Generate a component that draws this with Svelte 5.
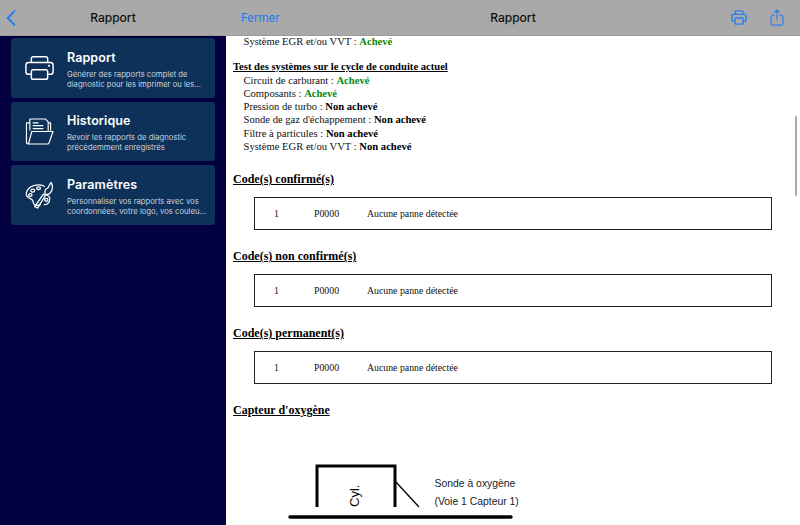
<script>
  const cards = [
    { id: 'print', title: 'Rapport', l1: 'Générer des rapports complet de', l2: 'diagnostic pour les imprimer ou les...' },
    { id: 'folder', title: 'Historique', l1: 'Revoir les rapports de diagnostic', l2: 'précédemment enregistrés' },
    { id: 'palette', title: 'Paramètres', l1: 'Personnaliser vos rapports avec vos', l2: 'coordonnées, votre logo, vos couleu...' }
  ];
  const systems = [
    ['Circuit de carburant', 'Achevé', true],
    ['Composants', 'Achevé', true],
    ['Pression de turbo', 'Non achevé', false],
    ['Sonde de gaz d\'échappement', 'Non achevé', false],
    ['Filtre à particules', 'Non achevé', false],
    ['Système EGR et/ou VVT', 'Non achevé', false]
  ];
  const codes = ['Code(s) confirmé(s)', 'Code(s) non confirmé(s)', 'Code(s) permanent(s)'];
</script>

<div class="root">
  <aside class="side">
    <header class="bar sidebar-bar">
      <svg class="back" viewBox="0 0 10 16" width="10" height="16"><path d="M8.5 1.2 1.8 8l6.7 6.8" fill="none" stroke="#1f7ff5" stroke-width="1.9" stroke-linecap="round" stroke-linejoin="round"/></svg>
      <span class="bar-title">Rapport</span>
    </header>
    <div class="cards">
      {#each cards as c}
        <div class="card">
          <div class="icon">
            {#if c.id === 'print'}
              <svg viewBox="0 0 32 28" width="29" height="26" fill="none" stroke="#fff" stroke-width="1.6" stroke-linejoin="round">
                <path d="M7 8V3.500A2 2 0 0 1 9 1.500h14a2 2 0 0 1 2 2V8"/>
                <path d="M7 21H4a3 3 0 0 1-3-3v-7a3 3 0 0 1 3-3h24a3 3 0 0 1 3 3v7a3 3 0 0 1-3 3h-3"/>
                <rect x="7" y="16" width="18" height="10.500" rx="2"/>
                <circle cx="26.500" cy="11.500" r="1.200" fill="#fff" stroke="none"/>
              </svg>
            {:else if c.id === 'folder'}
              <svg viewBox="0 0 30 28" width="29" height="27" fill="none" stroke="#fff" stroke-width="1.200" stroke-linejoin="round">
                <path d="M5 13V1h16l3 3v10"/>
                <path d="M24 5h2.500v8M5 5H1.500V25a2 2 0 0 0 2 2"/>
                <path d="M8 5h6M8 8h11M8 11h11" stroke-width="1.300"/>
                <path d="M3.500 27 7 14h22l-4 11.500a2 2 0 0 1-2 1.500z"/>
              </svg>
            {:else}
              <svg viewBox="0 0 30 30" width="29" height="30" fill="none" stroke="#fff" stroke-width="1.300" stroke-linejoin="round" stroke-linecap="round">
                <path d="M20 6C14 3 5 5 2 11c-2 5 1 7 4 8 3 1 2 3 3 5 1 2 4 2 7 1"/>
                <path d="M22 15c3 1 5 3 3 7-1 2-3 3-5 3"/>
                <ellipse cx="8" cy="10.500" rx="2" ry="1.500"/>
                <ellipse cx="14" cy="8" rx="2" ry="1.500"/>
                <ellipse cx="5.500" cy="15" rx="1.800" ry="1.500"/>
                <ellipse cx="22" cy="20" rx="1.800" ry="1.500"/>
                <path d="M11 29l9-13 2 1.500-8 13z" transform="translate(-1 -2)"/>
                <path d="M21 14c-1-3 0-5 2-6 2-1 2-4 4-6 2 3 2 8-1 11-1 1-3 2-5 1z"/>
              </svg>
            {/if}
          </div>
          <div class="text">
            <div class="title">{c.title}</div>
            <div class="desc">{c.l1}<br />{c.l2}</div>
          </div>
        </div>
      {/each}
    </div>
  </aside>

  <main class="main">
    <header class="bar main-bar">
      <span class="fermer">Fermer</span>
      <span class="bar-title center">Rapport</span>
      <div class="actions">
        <svg viewBox="0 0 18 17" width="16" height="15" fill="none" stroke="#2b7de9" stroke-width="1.600" stroke-linejoin="round">
          <path d="M4.500 5V2a1 1 0 0 1 1-1h7a1 1 0 0 1 1 1v3"/>
          <path d="M4 12.500H2.500a1.500 1.500 0 0 1-1.500-1.500V6.500A1.500 1.500 0 0 1 2.500 5h13A1.500 1.500 0 0 1 17 6.500V11a1.500 1.500 0 0 1-1.500 1.500H14"/>
          <rect x="4.500" y="9" width="9" height="7" rx="1"/>
        </svg>
        <svg viewBox="0 0 16 20" width="14" height="17" fill="none" stroke="#2b7de9" stroke-width="1.300" stroke-linecap="round" stroke-linejoin="round">
          <path d="M5 7H3a2 2 0 0 0-2 2v8a2 2 0 0 0 2 2h10a2 2 0 0 0 2-2V9a2 2 0 0 0-2-2h-2"/>
          <path d="M8 13V1M5 4l3-3 3 3"/>
        </svg>
      </div>
    </header>

    <div class="doc">
      <p class="line ind">Système EGR et/ou VVT : <b class="ok">Achevé</b></p>

      <h4>Test des systèmes sur le cycle de conduite actuel</h4>
      {#each systems as s}
        <p class="line ind">{s[0]} : <b class:ok={s[2]}>{s[1]}</b></p>
      {/each}

      {#each codes as code}
        <h3>{code}</h3>
        <div class="code-box">
          <span class="n">1</span><span class="p">P0000</span><span>Aucune panne détectée</span>
        </div>
      {/each}

      <h3>Capteur d'oxygène</h3>
      <svg class="diagram" viewBox="0 0 300 70" width="300" height="70">
        <path d="M58 47V6h78v41" fill="none" stroke="#000" stroke-width="3"/>
        <path d="M136 21l24 26" stroke="#000" stroke-width="1.300"/>
        <path d="M31 57h221" stroke="#000" stroke-width="3.500" stroke-linecap="round"/>
        <text x="0" y="0" transform="translate(100 47) rotate(-90)" class="dt">Cyl.</text>
        <text x="175.500" y="27" class="dl">Sonde à oxygène</text>
        <text x="175.500" y="45" class="dl">(Voie 1 Capteur 1)</text>
      </svg>
    </div>
    <div class="scroll"></div>
  </main>
</div>

<style>
  :global(body) { margin: 0; }
  .root { display: flex; width: 800px; height: 525px; overflow: hidden; font-family: Inter, "Liberation Sans", sans-serif; }
  .side { width: 226px; background: #02003f; flex: none; }
  .bar { height: 35px; background: #a9a9a9; display: flex; align-items: center; border-bottom: 1px solid #9c9c9c; box-sizing: content-box; }
  .sidebar-bar { position: relative; }
  .back { margin-left: 6px; }
  .bar-title { font-size: 12px; font-weight: 500; color: #111; }
  .sidebar-bar .bar-title { position: absolute; left: 0; right: 0; text-align: center; }
  .cards { padding: 2px 11px 0; display: flex; flex-direction: column; gap: 4px; }
  .card { height: 59.500px; background: #0e3159; border-radius: 3px; display: flex; align-items: center; }
  .icon { width: 56px; display: flex; justify-content: center; flex: none; }
  .text { color: #fff; padding-top: 4px; }
  .title { font-size: 12.500px; font-weight: 600; line-height: 16px; margin-bottom: 4px; letter-spacing: .1px; }
  .desc { font-size: 7.700px; line-height: 9.800px; color: #c9d3de; white-space: nowrap; }
  .main { flex: 1; background: #fff; position: relative; overflow: hidden; }
  .main-bar { position: relative; }
  .fermer { color: #1f78f0; font-size: 11.500px; margin-left: 15px; }
  .center { position: absolute; left: 0; right: 0; text-align: center; }
  .actions { position: absolute; right: 16px; top: 9px; display: flex; gap: 23px; align-items: center; }
  .doc { padding: 0 0 0 7px; font-family: "Liberation Serif", serif; font-size: 10.600px; color: #111; }
  .line { margin: 0; line-height: 13.300px; height: 13.300px; }
  .ind { padding-left: 10.500px; }
  .doc > .line:first-child { margin-top: -1px; }
  b { color: #000; }
  .ok { color: #0a8a0a; }
  h4 { margin: 13px 0 0; font-size: 10.600px; line-height: 12.300px; text-decoration: underline; color: #000; }
  h3 { margin: 18px 0 0; font-size: 12px; line-height: 16px; text-decoration: underline; color: #000; }
  .code-box { margin: 10px 0 0 21px; width: 518px; height: 33px; box-sizing: border-box; border: 1px solid #222; display: flex; align-items: center; font-size: 9.800px; }
  .n { width: 40px; margin-left: 19px; }
  .p { width: 53px; }
  .diagram { display: block; margin: 42px 0 0 26px; }
  .dt { font: 13px "Liberation Sans", sans-serif; fill: #000; }
  .dl { font: 10.400px "Liberation Sans", sans-serif; fill: #222; }
  .scroll { position: absolute; right: 3px; top: 116px; width: 2px; height: 80px; background: #aaa; border-radius: 1px; }
</style>
